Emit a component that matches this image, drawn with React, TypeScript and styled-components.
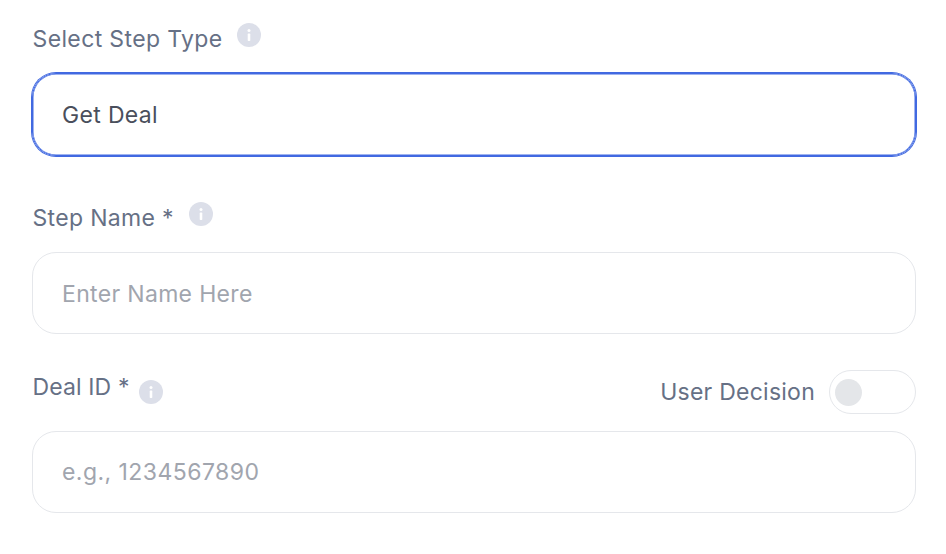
import React from "react";
import styled, { createGlobalStyle } from "styled-components";

const Global = createGlobalStyle`
  html, body { margin: 0; padding: 0; background: #fff; }
  body { font-family: Inter, "Liberation Sans", sans-serif; }
`;

const Page = styled.div`
  width: 946px;
  height: 554px;
  box-sizing: border-box;
  padding: 23px 30px 0 32px;
  display: flex;
  flex-direction: column;
  overflow: hidden;
`;

const Field = styled.div<{ $bottom: number }>`
  display: flex;
  flex-direction: column;
  margin-bottom: ${(p) => p.$bottom}px;
`;

const LabelRow = styled.div<{ $height: number; $gap: number }>`
  display: flex;
  justify-content: space-between;
  align-items: flex-start;
  height: ${(p) => p.$height}px;
  margin-bottom: ${(p) => p.$gap}px;
`;

const LabelGroup = styled.div<{ $gap: number }>`
  display: flex;
  align-items: flex-start;
  gap: ${(p) => p.$gap}px;
`;

const Label = styled.label<{ $top: number; $spacing: number }>`
  font-size: 23px;
  font-weight: 420;
  line-height: 32px;
  letter-spacing: ${(p) => p.$spacing}px;
  color: #667085;
  margin-top: ${(p) => p.$top}px;
  margin-left: 0.5px;
  white-space: nowrap;
`;

const InfoBadge = styled.svg<{ $top: number }>`
  width: 24px;
  height: 24px;
  display: block;
  flex: none;
  margin-top: ${(p) => p.$top}px;
`;

const Input = styled.div<{ $focused?: boolean; $placeholder?: boolean; $shift?: number; $spacing?: number }>`
  box-sizing: border-box;
  width: 884px;
  height: ${(p) => (p.$focused ? 83 : 82)}px;
  display: flex;
  align-items: center;
  padding: ${(p) => p.$shift ?? 0}px 29px 0;
  border-radius: 24px;
  border: 1px solid ${(p) => (p.$focused ? "#4169e1" : "#e5e7eb")};
  box-shadow: ${(p) =>
    p.$focused ? "0 0 0 1px #4169e1, inset 0 0 0 0.5px #4169e1" : "none"};
  font-size: 23px;
  font-weight: ${(p) => (p.$placeholder ? 400 : 420)};
  letter-spacing: ${(p) => p.$spacing ?? 0.33}px;
  color: ${(p) => (p.$placeholder ? "#a1a5ae" : "#4a4f5c")};
`;

const ToggleGroup = styled.div`
  display: flex;
  align-items: center;
  gap: 14px;
`;

const ToggleLabel = styled.span`
  font-size: 23px;
  font-weight: 420;
  line-height: 44px;
  letter-spacing: 0.25px;
  color: #667085;
  white-space: nowrap;
`;

const Switch = styled.div`
  box-sizing: border-box;
  width: 87px;
  height: 44px;
  border: 1px solid #e5e7eb;
  border-radius: 22px;
  padding: 0 5px;
  display: flex;
  align-items: center;
`;

const Knob = styled.div`
  width: 27px;
  height: 27px;
  border-radius: 50%;
  background: #e4e6e9;
`;

const InfoIcon = ({ top }: { top: number }) => (
  <InfoBadge $top={top} viewBox="0 0 24 24" aria-hidden="true">
    <circle cx="12" cy="12" r="12" fill="#dcdfe9" />
    <circle cx="12" cy="7.6" r="1.5" fill="#fff" />
    <rect x="10.7" y="10.6" width="2.6" height="7.4" rx="0.8" fill="#fff" />
  </InfoBadge>
);

export default function App() {
  return (
    <Page>
      <Global />
      <Field $bottom={46}>
        <LabelRow $height={32} $gap={18}>
          <LabelGroup $gap={14}>
            <Label $top={0} $spacing={0.37}>Select Step Type</Label>
            <InfoIcon top={0} />
          </LabelGroup>
        </LabelRow>
        <Input $focused>Get Deal</Input>
      </Field>
      <Field $bottom={36}>
        <LabelRow $height={32} $gap={18}>
          <LabelGroup $gap={15}>
            <Label $top={0} $spacing={0.33}>Step Name *</Label>
            <InfoIcon top={0} />
          </LabelGroup>
        </LabelRow>
        <Input $placeholder $shift={1}>Enter Name Here</Input>
      </Field>
      <Field $bottom={0}>
        <LabelRow $height={44} $gap={17}>
          <LabelGroup $gap={9}>
            <Label $top={1} $spacing={0.12}>Deal ID *</Label>
            <InfoIcon top={10} />
          </LabelGroup>
          <ToggleGroup>
            <ToggleLabel>User Decision</ToggleLabel>
            <Switch>
              <Knob />
            </Switch>
          </ToggleGroup>
        </LabelRow>
        <Input $placeholder $spacing={0.45}>e.g., 1234567890</Input>
      </Field>
    </Page>
  );
}
